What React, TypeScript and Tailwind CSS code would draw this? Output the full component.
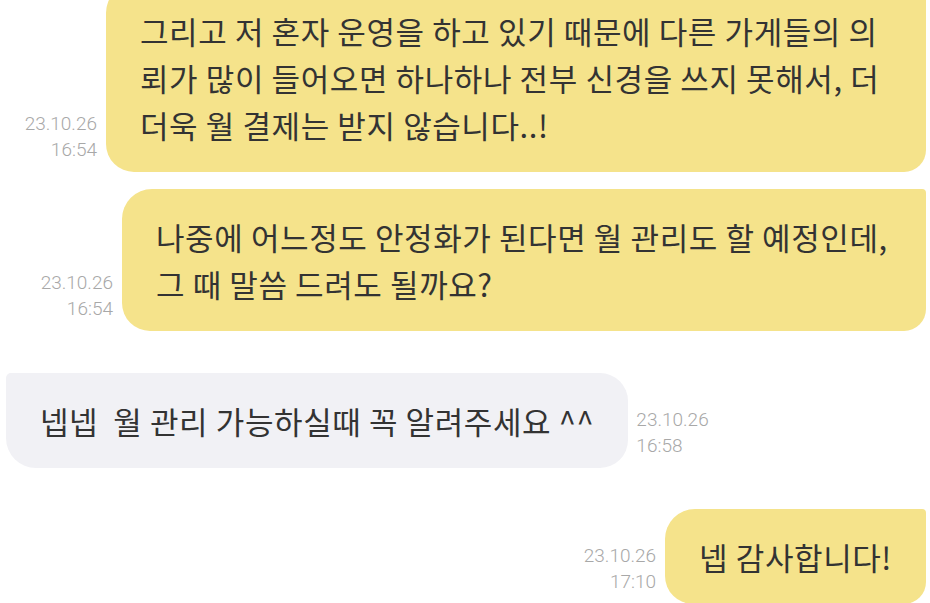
import React from 'react';

const bodyFont = "font-['Noto_Sans_CJK_KR','Noto_Sans',sans-serif]";
const timeFont = "font-['Roboto','Liberation_Sans',sans-serif]";

function Stamp({ date, time, align }: { date: string; time: string; align: 'left' | 'right' }) {
  return (
    <div
      className={`${timeFont} font-light text-[19px] leading-[26px] text-[#a8a8a8] mb-[9px] shrink-0 ${
        align === 'right' ? 'text-right' : 'text-left'
      }`}
    >
      <div>{date}</div>
      <div>{time}</div>
    </div>
  );
}

function SentRow({ lines, date, time, width }: { lines: string[]; date: string; time: string; width?: string }) {
  return (
    <div className="flex justify-end items-end gap-[9px] pr-[4px]">
      <Stamp date={date} time={time} align="right" />
      <div
        className={`${bodyFont} ${width ?? ''} bg-[#f5e38b] text-[#333333] text-[31px] leading-[47px] tracking-[0.6px] px-[34px] py-[24px] rounded-tl-[30px] rounded-bl-[28px] rounded-br-[22px] rounded-tr-[4px] whitespace-pre`}
      >
        {lines.map((l, i) => (
          <div key={i}>{l}</div>
        ))}
      </div>
    </div>
  );
}

export default function App() {
  return (
    <div className="w-[930px] h-[603px] overflow-hidden bg-white">
      <div className="flex flex-col -mt-[17px]">
        <SentRow
          width="w-[820px]"
          date="23.10.26"
          time="16:54"
          lines={[
            '그리고 저 혼자 운영을 하고 있기 때문에 다른 가게들의 의',
            '뢰가 많이 들어오면 하나하나 전부 신경을 쓰지 못해서, 더',
            '더욱 월 결제는 받지 않습니다..!',
          ]}
        />
        <div className="h-[17px]" />
        <SentRow
          width="w-[804px]"
          date="23.10.26"
          time="16:54"
          lines={['나중에 어느정도 안정화가 된다면 월 관리도 할 예정인데,', '그 때 말씀 드려도 될까요?']}
        />
        <div className="h-[42px]" />
        <div className="flex items-end gap-[8px] pl-[6px]">
          <div
            className={`${bodyFont} bg-[#f1f1f5] text-[#333333] text-[31px] leading-[47px] tracking-[0.6px] px-[34px] py-[24px] rounded-tl-[5px] rounded-tr-[28px] rounded-br-[28px] rounded-bl-[30px] whitespace-pre`}
          >
            넵넵  월 관리 가능하실때 꼭 알려주세요 ^^
          </div>
          <Stamp date="23.10.26" time="16:58" align="left" />
        </div>
        <div className="h-[41px]" />
        <SentRow date="23.10.26" time="17:10" lines={['넵 감사합니다!']} />
      </div>
    </div>
  );
}
